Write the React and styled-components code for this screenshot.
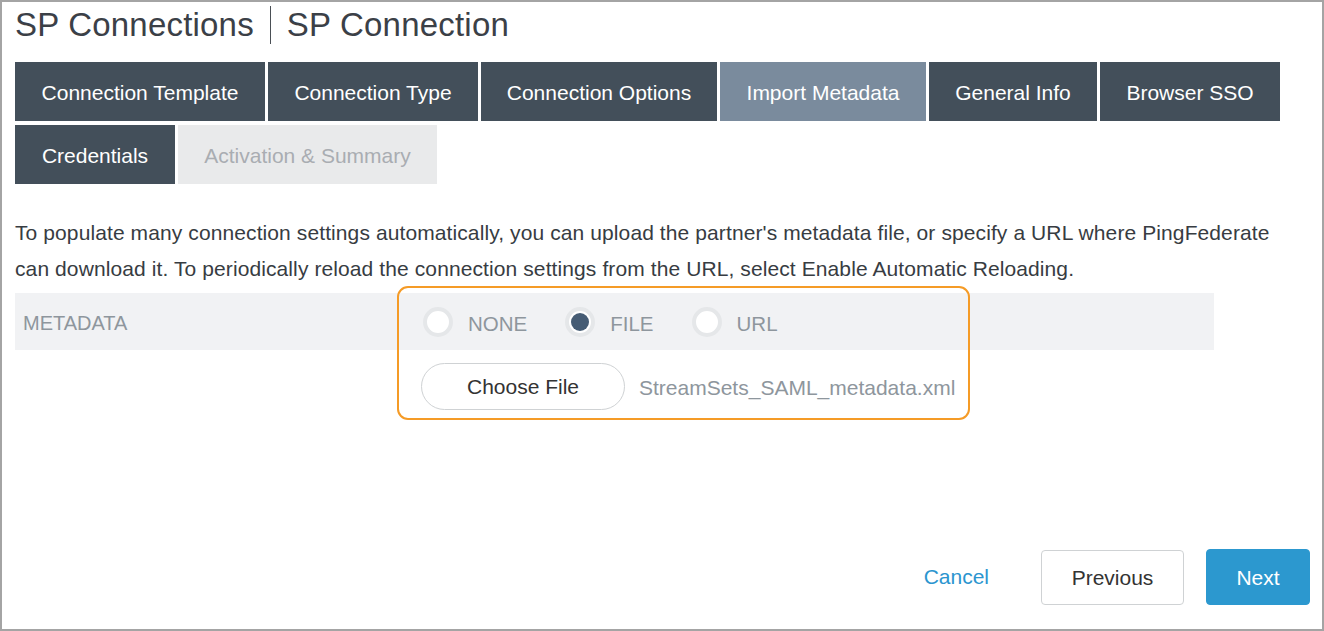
import styled, { createGlobalStyle } from "styled-components";

const GlobalStyle = createGlobalStyle`
  html, body {
    margin: 0;
    padding: 0;
    background: #fff;
  }
  body {
    font-family: "Liberation Sans", Arial, sans-serif;
  }
`;

const Frame = styled.div`
  box-sizing: border-box;
  width: 1324px;
  height: 631px;
  border: 2px solid #a4a4a4;
  padding: 0 12px 24px 13px;
  display: flex;
  flex-direction: column;
  color: #3b4047;
`;

const Header = styled.h1`
  margin: 4px 0 0;
  display: flex;
  align-items: center;
  font-size: 33px;
  font-weight: 400;
  line-height: 38px;
  letter-spacing: 0.2px;
`;

const Divider = styled.span`
  width: 1px;
  height: 38px;
  background: #4a4f55;
  margin: 0 16px 0 16px;
`;

const Tabs = styled.nav`
  margin-top: 18px;
  display: flex;
  flex-wrap: wrap;
  gap: 4px 3px;
  width: 1270px;
`;

const tabColors = {
  done: { bg: "#434f5a", fg: "#ffffff" },
  active: { bg: "#7a8b9d", fg: "#ffffff" },
  todo: { bg: "#e9eaeb", fg: "#a9adb2" },
};

const Tab = styled.div`
  box-sizing: border-box;
  width: ${(p) => p.$w}px;
  height: 59px;
  padding-top: 2px;
  display: flex;
  align-items: center;
  justify-content: center;
  font-size: 21px;
  background: ${(p) => tabColors[p.$state].bg};
  color: ${(p) => tabColors[p.$state].fg};
`;

const Intro = styled.p`
  margin: 31px 0 0;
  width: 1290px;
  font-size: 21px;
  letter-spacing: 0.1px;
  line-height: 36px;
  color: #373c42;
`;

const Field = styled.div`
  position: relative;
  margin-top: 6px;
`;

const Band = styled.div`
  width: 1199px;
  height: 57px;
  background: #f1f2f4;
  display: flex;
  align-items: center;
`;

const FieldLabel = styled.div`
  box-sizing: border-box;
  width: 408px;
  padding: 3px 0 0 8px;
  font-size: 20px;
  color: #8e969d;
`;

const RadioGroup = styled.div`
  display: flex;
  align-items: center;
  gap: 38px;
`;

const RadioOption = styled.label`
  display: flex;
  align-items: center;
  gap: 15px;
  font-size: 20.5px;
  color: #8e969d;
`;

const RadioText = styled.span`
  padding-top: 5px;
`;

const RadioMark = styled.span`
  box-sizing: border-box;
  width: 30px;
  height: 30px;
  border-radius: 50%;
  border: 4px solid #e5e7e9;
  background: #fff;
  display: flex;
  align-items: center;
  justify-content: center;

  &::after {
    content: "";
    width: 18px;
    height: 18px;
    border-radius: 50%;
    background: ${(p) => (p.$checked ? "#465c74" : "transparent")};
  }
`;

const FileRow = styled.div`
  margin-top: 13px;
  padding-left: 406px;
  display: flex;
  align-items: center;
  gap: 14px;
`;

const ChooseButton = styled.button`
  box-sizing: border-box;
  width: 204px;
  height: 47px;
  padding-top: 2px;
  border: 1px solid #cfd2d4;
  border-radius: 24px;
  background: #fff;
  font-family: inherit;
  font-size: 21px;
  color: #333;
`;

const FileName = styled.span`
  padding-top: 2px;
  font-size: 21px;
  color: #8e969d;
`;

const FocusRing = styled.div`
  position: absolute;
  left: 382px;
  top: -7px;
  box-sizing: border-box;
  width: 573px;
  height: 134px;
  border: 2px solid #f59b26;
  border-radius: 11px;
  pointer-events: none;
`;

const Footer = styled.div`
  margin-top: auto;
  display: flex;
  justify-content: flex-end;
  align-items: center;
`;

const LinkButton = styled.button`
  border: none;
  background: none;
  padding: 0;
  margin-right: 52px;
  font-family: inherit;
  font-size: 21px;
  color: #2b95cf;
`;

const Button = styled.button`
  box-sizing: border-box;
  width: ${(p) => p.$w}px;
  height: ${(p) => p.$h}px;
  padding-top: 2px;
  border-radius: 4px;
  font-family: inherit;
  font-size: 21px;
  border: 1px solid ${(p) => (p.$primary ? "#2c98cf" : "#cfd2d4")};
  background: ${(p) => (p.$primary ? "#2c98cf" : "#fff")};
  color: ${(p) => (p.$primary ? "#fff" : "#333")};
  margin-left: ${(p) => p.$gap || 0}px;
`;

const tabs = [
  { label: "Connection Template", w: 250, state: "done" },
  { label: "Connection Type", w: 210, state: "done" },
  { label: "Connection Options", w: 236, state: "done" },
  { label: "Import Metadata", w: 206, state: "active" },
  { label: "General Info", w: 168, state: "done" },
  { label: "Browser SSO", w: 180, state: "done" },
  { label: "Credentials", w: 160, state: "done" },
  { label: "Activation & Summary", w: 259, state: "todo" },
];

const options = [
  { label: "NONE", checked: false },
  { label: "FILE", checked: true },
  { label: "URL", checked: false },
];

const App = () => {
  return (
    <Frame>
      <GlobalStyle />
      <Header>
        SP Connections
        <Divider />
        SP Connection
      </Header>
      <Tabs>
        {tabs.map((t) => (
          <Tab key={t.label} $w={t.w} $state={t.state}>
            {t.label}
          </Tab>
        ))}
      </Tabs>
      <Intro>
        To populate many connection settings automatically, you can upload the
        partner's metadata file, or specify a URL where PingFederate can
        download it. To periodically reload the connection settings from the
        URL, select Enable Automatic Reloading.
      </Intro>
      <Field>
        <Band>
          <FieldLabel>METADATA</FieldLabel>
          <RadioGroup>
            {options.map((o) => (
              <RadioOption key={o.label}>
                <RadioMark $checked={o.checked} />
                <RadioText>{o.label}</RadioText>
              </RadioOption>
            ))}
          </RadioGroup>
        </Band>
        <FileRow>
          <ChooseButton>Choose File</ChooseButton>
          <FileName>StreamSets_SAML_metadata.xml</FileName>
        </FileRow>
        <FocusRing />
      </Field>
      <Footer>
        <LinkButton>Cancel</LinkButton>
        <Button $w={143} $h={55}>
          Previous
        </Button>
        <Button $w={104} $h={56} $gap={22} $primary>
          Next
        </Button>
      </Footer>
    </Frame>
  );
};

export default App;
